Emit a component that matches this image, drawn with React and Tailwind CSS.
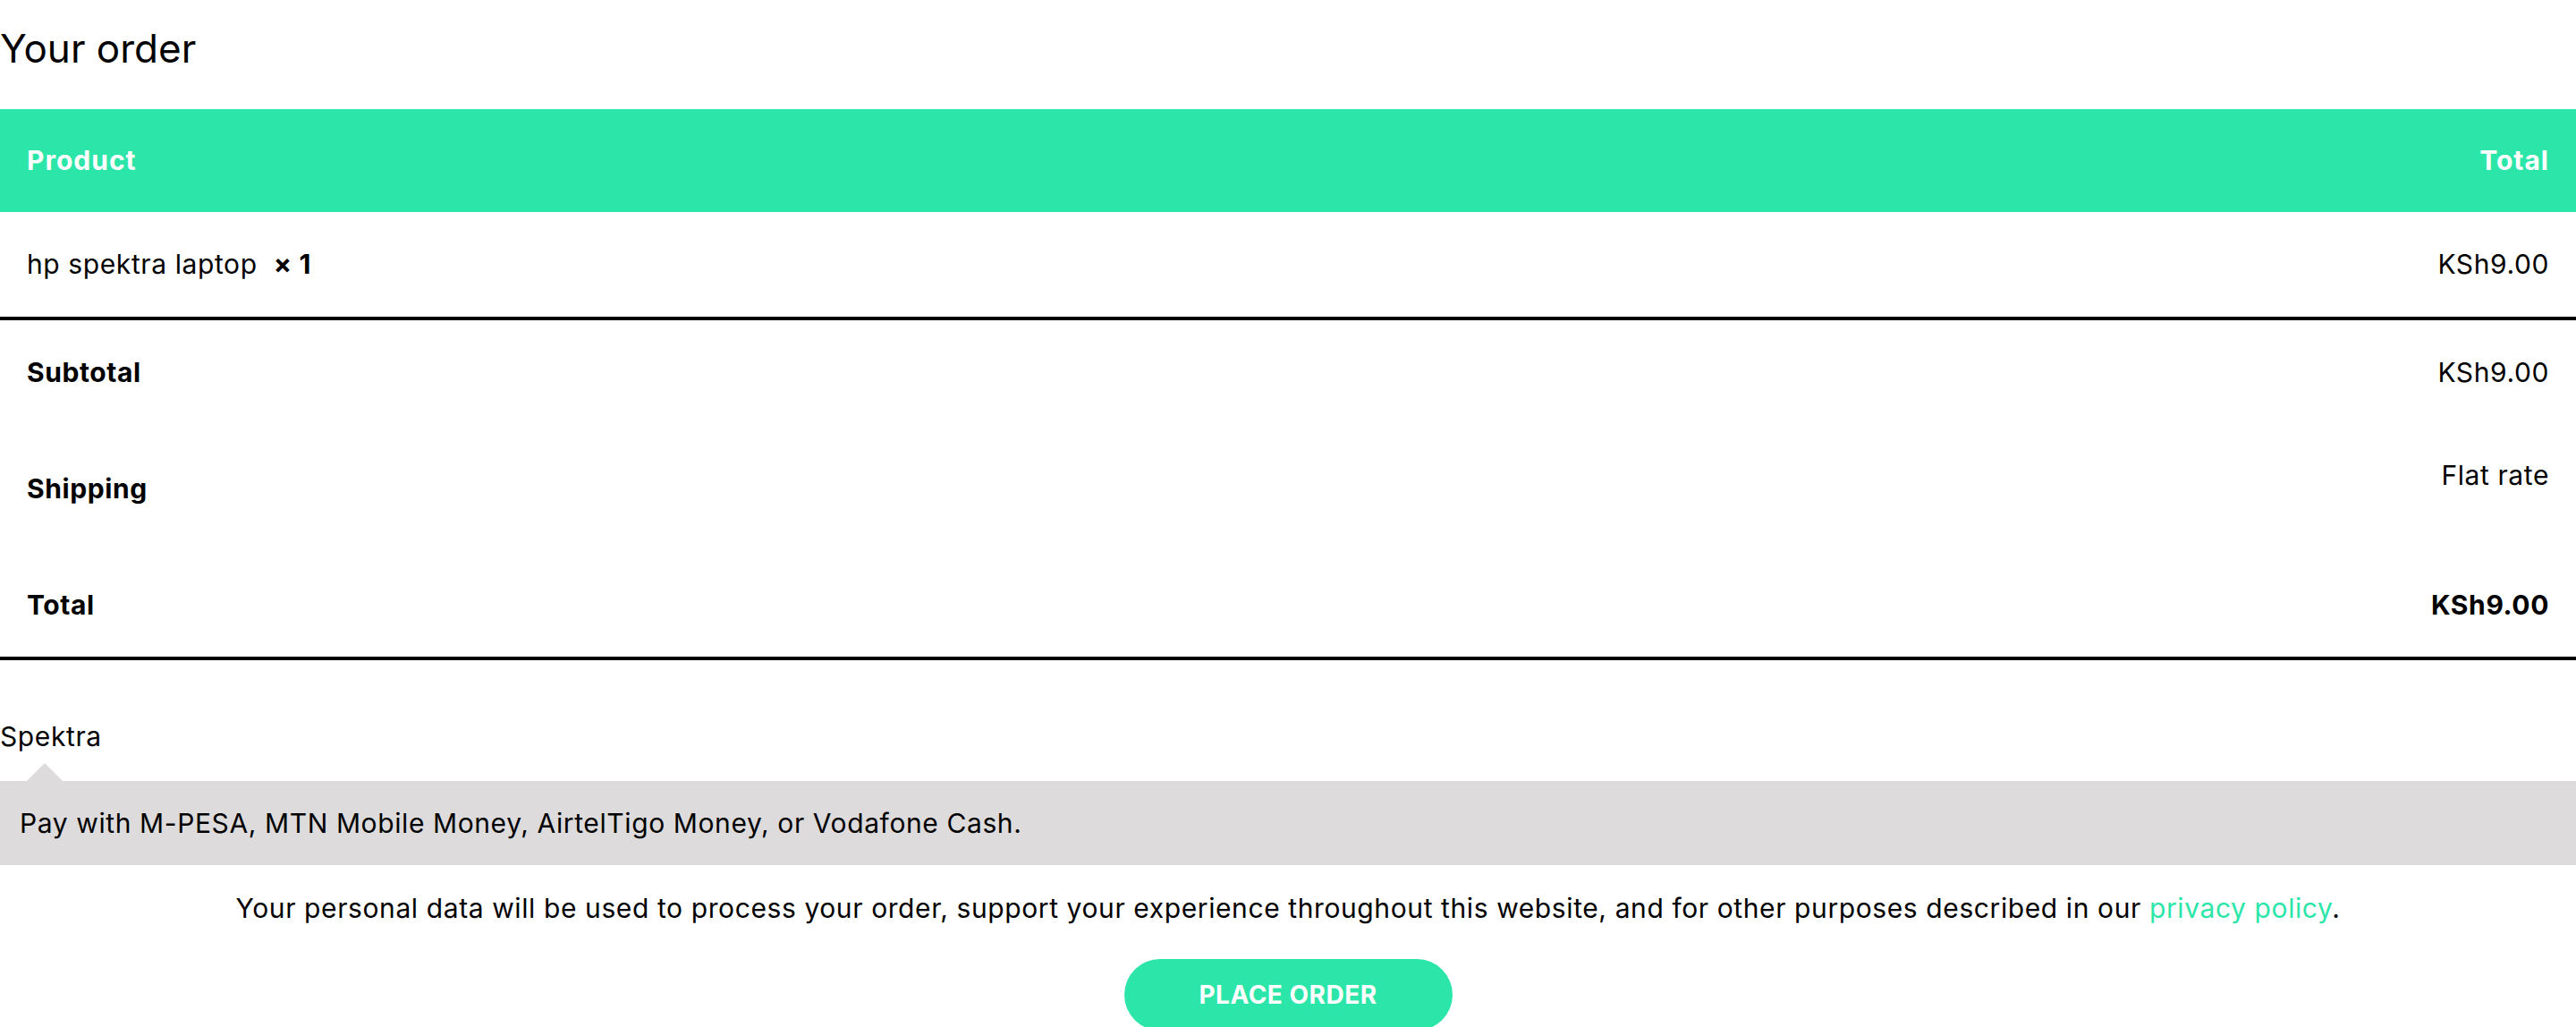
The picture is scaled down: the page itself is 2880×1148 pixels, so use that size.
import React from 'react';

const rows = [
    { label: 'Subtotal', value: 'KSh9.00' },
];

export default function App() {
    return (
        <div className="w-[2880px] bg-white text-black font-['Inter',sans-serif] tracking-[0.6px]">
            <h3 className="pt-[32px] mb-[46px] text-[44px] leading-none font-normal tracking-normal">Your order</h3>

            {/* Table */}
            <div className="w-full">
                <div className="h-[115px] flex items-center justify-between bg-[#2be6a8] text-white text-[30px] font-bold px-[30px] tracking-[1px]">
                    <span>Product</span>
                    <span>Total</span>
                </div>
                <div className="h-[121px] flex items-center justify-between px-[30px] text-[30px] border-b-4 border-black">
                    <span>
                        hp spektra laptop&nbsp; <strong className="font-bold">×&nbsp;1</strong>
                    </span>
                    <span>KSh9.00</span>
                </div>
                {rows.map((r) => (
                    <div key={r.label} className="h-[116px] flex items-center justify-between px-[30px] text-[30px]">
                        <span className="font-bold">{r.label}</span>
                        <span>{r.value}</span>
                    </div>
                ))}
                <div className="h-[144px] flex justify-between px-[30px] text-[30px]">
                    <span className="font-bold self-center">Shipping</span>
                    <span className="pt-[35px] leading-[45px]">Flat rate</span>
                </div>
                <div className="h-[120px] flex items-center justify-between px-[30px] text-[30px] font-bold border-b-4 border-black">
                    <span>Total</span>
                    <span>KSh9.00</span>
                </div>
            </div>

            {/* Payment */}
            <div className="pt-[70px]">
                <div className="text-[30px] leading-none">Spektra</div>
                <div className="relative mt-[35px] h-[94px] bg-[#dddbdc] flex items-center px-[22px] text-[30px]">
                    <span className="absolute left-[30px] -top-[20px] w-0 h-0 border-l-[20px] border-r-[20px] border-b-[20px] border-l-transparent border-r-transparent border-b-[#dddbdc]"></span>
                    Pay with M-PESA, MTN Mobile Money, AirtelTigo Money, or Vodafone Cash.
                </div>
            </div>

            <p className="mt-[28px] text-center text-[30px] leading-[40px]">
                Your personal data will be used to process your order, support your experience throughout this website, and for other purposes described in our{' '}
                <a className="text-[#2be6a8]">privacy policy</a>.
            </p>

            <div className="flex justify-center mt-[37px]">
                <button className="w-[367px] h-[80px] rounded-full bg-[#2be6a8] text-white text-[28px] font-bold uppercase tracking-[0.5px]">
                    Place order
                </button>
            </div>
        </div>
    );
}
